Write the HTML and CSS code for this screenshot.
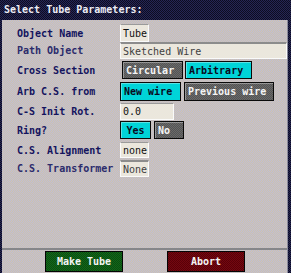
FILE: index.html
```html
<!DOCTYPE html>
<html lang="en">
<head>
    <meta charset="UTF-8">
    <title>Select Tube Parameters</title>
    <link rel="stylesheet" href="styles.css">
</head>
<body>
    <div class="dialog">
        <div class="title">Select Tube Parameters:</div>
        <div class="panel">
            <div class="form">
                <div class="row r1">
                    <span class="label">Object Name</span>
                    <span class="field w-short">Tube</span>
                </div>
                <div class="row r2">
                    <span class="label dim">Path Object</span>
                    <span class="field off w-long">Sketched Wire</span>
                </div>
                <div class="row r3">
                    <span class="label">Cross Section</span>
                    <span class="btn gray b-circ">Circular</span>
                    <span class="btn cyan b-arb">Arbitrary</span>
                </div>
                <div class="row r4">
                    <span class="label">Arb C.S. from</span>
                    <span class="btn cyan b-new">New wire</span>
                    <span class="btn gray b-prev">Previous wire</span>
                </div>
                <div class="row r5">
                    <span class="label">C-S Init Rot.</span>
                    <span class="field w-rot">0.0</span>
                </div>
                <div class="row r6">
                    <span class="label">Ring?</span>
                    <span class="btn cyan b-yes">Yes</span>
                    <span class="btn gray b-no">No</span>
                </div>
                <div class="row r7">
                    <span class="label">C.S. Alignment</span>
                    <span class="field w-short">none</span>
                </div>
                <div class="row r8">
                    <span class="label dim">C.S. Transformer</span>
                    <span class="field off w-short">None</span>
                </div>
            </div>
            <div class="footer">
                <span class="act green">Make Tube</span>
                <span class="act red">Abort</span>
            </div>
        </div>
    </div>
</body>
</html>
```
FILE: styles.css
```css
* {
    box-sizing: border-box;
}

body {
    margin: 0;
    width: 291px;
    height: 273px;
    overflow: hidden;
    font-family: "DejaVu Sans Mono", monospace;
    font-size: 10px;
    background: repeating-conic-gradient(#262654 0 25%, #0c0c22 0 50%) 0 0 / 2px 2px;
}

.dialog {
    display: flex;
    flex-direction: column;
    height: 273px;
}

.title {
    height: 20px;
    padding: 4px 0 0 4px;
    color: #ececf4;
    font-weight: bold;
    line-height: 12px;
}

.panel {
    margin-left: 2px;
    width: 286px;
    flex: 1;
    display: flex;
    flex-direction: column;
    background: repeating-conic-gradient(#cdc2ae 0 25%, #c0bed4 0 50%) 0 0 / 2px 2px;
    border-right: 1px solid #8a8a9a;
}

.form {
    height: 230px;
    padding-top: 4px;
    border-bottom: 2px solid #86868a;
}

.row {
    display: flex;
    align-items: center;
    gap: 2px;
}

.r1 { height: 18px; }
.r2 { height: 17px; }
.r3 { height: 18px; margin-top: 2px; }
.r4 { height: 19px; margin-top: 3px; }
.r5 { height: 17px; margin-top: 2px; }
.r6 { height: 18px; margin-top: 1px; }
.r7 { height: 16px; margin-top: 3px; }
.r8 { height: 17px; margin-top: 2px; }

.label {
    width: 116px;
    padding-left: 15px;
    color: #14145e;
    font-weight: bold;
    white-space: nowrap;
}

.label.dim {
    color: #2c2c6c;
}

.field {
    height: 100%;
    padding: 0 2px;
    display: flex;
    align-items: center;
    color: #101010;
    background: #ebe7dd;
    border: 1px solid #fafafa;
    border-top-color: #9a9a9a;
    white-space: nowrap;
}

.field.off {
    color: #404040;
    border-top: 2px solid #8c8c8c;
}

.w-short { width: 29px; }
.w-long { width: 167px; }
.w-rot { width: 54px; }

.btn {
    height: 100%;
    display: flex;
    align-items: center;
    padding: 0 3px;
    border: 1px solid #0a0a0a;
    box-shadow: inset 1px 1px 0 rgba(255, 255, 255, 0.35);
    white-space: nowrap;
    font-weight: bold;
}

.btn.gray {
    color: #f4f4f4;
    background: repeating-conic-gradient(#6a6a6a 0 25%, #545454 0 50%) 0 0 / 2px 2px;
}

.btn.cyan {
    color: #0a0a20;
    background: #00d4d8;
}

.b-circ { width: 61px; margin-left: 2px; }
.b-arb { width: 67px; }
.b-new { width: 61px; }
.b-prev { width: 90px; margin-left: 1px; }
.b-yes { width: 31px; justify-content: center; }
.b-no { width: 30px; margin-left: 1px; }

.footer {
    flex: 1;
    display: flex;
    gap: 44px;
    padding: 1px 0 0 43px;
}

.act {
    width: 78px;
    height: 21px;
    display: flex;
    align-items: center;
    justify-content: center;
    color: #f4f4f4;
    font-weight: bold;
    border: 1px solid #050505;
}

.act.green {
    background: repeating-conic-gradient(#13661a 0 25%, #0a4e10 0 50%) 0 0 / 2px 2px;
}

.act.red {
    background: repeating-conic-gradient(#740810 0 25%, #580008 0 50%) 0 0 / 2px 2px;
}
```
